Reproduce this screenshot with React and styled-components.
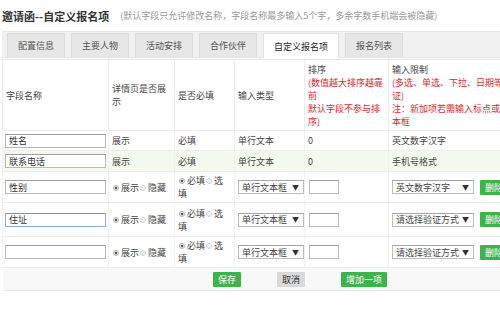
import React from "react"
import styled, { createGlobalStyle } from "styled-components"

const GlobalStyle = createGlobalStyle`
  html, body {
    margin: 0;
    padding: 0;
    background: #fff;
    overflow: hidden;
  }
  body {
    font-family: "Noto Sans CJK SC", "Noto Sans", "Liberation Sans", sans-serif;
    font-size: 9px;
    color: #333;
  }
`

const Page = styled.div`
  width: 500px;
  overflow: hidden;
  padding-left: 2px;
  box-sizing: border-box;
`

const TitleBar = styled.div`
  height: 31px;
  display: flex;
  align-items: center;
  gap: 11px;
`

const Title = styled.h1`
  margin: 0;
  font-size: 11px;
  font-weight: bold;
  color: #333;
`

const Hint = styled.span`
  font-size: 9px;
  color: #999;
  white-space: nowrap;
`

const TabBar = styled.div`
  display: flex;
  align-items: flex-end;
  gap: 6px;
  height: 27px;
  width: 600px;
  padding-left: 5px;
  background: #f1f1f1;
  border-top: 1px solid #e6e6e6;
  border-bottom: 1px solid #e2e2e2;
  box-sizing: border-box;
`

const Tab = styled.div`
  height: 23px;
  padding: 0 10px;
  min-width: 36px;
  display: flex;
  align-items: center;
  justify-content: center;
  white-space: nowrap;
  color: ${(p) => (p.$active ? "#222" : "#555")};
  background: ${(p) => (p.$active ? "#fff" : "#e7e7e7")};
  border: 1px solid ${(p) => (p.$active ? "#e2e2e2" : "#dcdcdc")};
  border-bottom: none;
  margin-bottom: ${(p) => (p.$active ? "-1px" : "0")};
  height: ${(p) => (p.$active ? "24px" : "23px")};
`

const Table = styled.table`
  margin-top: 1px;
  width: 596px;
  border-collapse: collapse;
  table-layout: fixed;
  line-height: 13px;
`

const Th = styled.th`
  font-weight: normal;
  text-align: left;
  vertical-align: middle;
  padding: 1px 3px;
  height: 68px;
  border: 1px solid #ececec;
  border-top-color: #e4e4e4;
  color: #444;
  white-space: nowrap;
`

const Red = styled.span`
  color: #e3262a;
`

const Row = styled.tr`
  background: ${(p) => (p.$tint ? "#f3f9ee" : "#fff")};
  height: ${(p) => p.$h}px;
`

const Td = styled.td`
  padding: 0 3px;
  vertical-align: middle;
  border-bottom: 1px solid #ececec;
  border-left: 1px solid #f1f1f1;
  border-right: 1px solid #f1f1f1;
  color: #444;
  white-space: nowrap;
`

const NameInput = styled.input`
  box-sizing: border-box;
  width: 101px;
  height: 14px;
  margin: 0 0 0 -1px;
  padding: 0 3px;
  font: inherit;
  font-size: 9px;
  color: #333;
  background: #fff;
  border: 1px solid ${(p) => (p.$focus ? "#8fb3dd" : "#b9b9b9")};
  border-top-color: ${(p) => (p.$focus ? "#6b98cf" : "#9d9d9d")};
  outline: none;
`

const SortInput = styled.input`
  box-sizing: border-box;
  width: 30px;
  height: 14px;
  margin: 0 0 0 1px;
  padding: 0 2px;
  font: inherit;
  background: #fff;
  border: 1px solid #bdbdbd;
  border-top-color: #a2a2a2;
  outline: none;
`

const Choices = styled.div`
  display: block;
  white-space: nowrap;
`

const Dot = styled.span`
  display: inline-block;
  box-sizing: border-box;
  width: 6px;
  height: 6px;
  border-radius: 50%;
  margin: 0 2px 0 1px;
  vertical-align: 0;
  border: 1px solid ${(p) => (p.$on ? "#b5b5b5" : "#c9d3dc")};
  background: ${(p) =>
    p.$on ? "radial-gradient(circle, #555 0 1.3px, #e4e4e4 1.6px)" : "#f2f4f6"};
`

const SelectBox = styled.div`
  box-sizing: border-box;
  display: inline-flex;
  align-items: center;
  justify-content: space-between;
  width: ${(p) => p.$w}px;
  height: 14px;
  padding: 0 4px 0 3px;
  background: #fff;
  border: 1px solid #bdbdbd;
  border-top-color: #a5a5a5;
  color: #444;
  vertical-align: middle;
`

const Arrow = styled.span`
  font-size: 7px;
  color: #333;
`

const LimitCell = styled.div`
  display: flex;
  align-items: center;
  gap: 6px;
`

const Button = styled.button`
  height: 15px;
  padding: 0 5px;
  border: none;
  border-radius: 1px;
  font: inherit;
  font-size: 9px;
  line-height: 15px;
  color: ${(p) => (p.$gray ? "#333" : "#fff")};
  background: ${(p) => (p.$gray ? "#d9d9d9" : "#3db44a")};
  cursor: pointer;
`

const FootCell = styled.td`
  height: 22px;
  background: #f8f8f8;
  border-bottom: 1px solid #e6e6e6;
  padding: 0;
`

const FootBar = styled.div`
  display: flex;
  justify-content: center;
  align-items: center;
  gap: 36px;
`

const tabs = ["配置信息", "主要人物", "活动安排", "合作伙伴", "自定义报名项", "报名列表"]

const Radios = ({ a, b, wrap }) => (
  <Choices>
    <Dot $on />
    {a}
    <Dot />
    {wrap ? (
      <>
        {b[0]}
        <br />
        {b[1]}
      </>
    ) : (
      b
    )}
  </Choices>
)

const fixedRows = [
  { name: "姓名", limit: "英文数字汉字" },
  { name: "联系电话", limit: "手机号格式", tint: true },
]

const editRows = [
  { name: "性别", limit: "英文数字汉字", h: 31 },
  { name: "住址", limit: "请选择验证方式", h: 34, focus: true },
  { name: "", limit: "请选择验证方式", h: 31 },
]

export default function App() {
  return (
    <Page>
      <GlobalStyle />
      <TitleBar>
        <Title>邀请函--自定义报名项</Title>
        <Hint>(默认字段只允许修改名称，字段名称最多输入5个字，多余字数手机端会被隐藏)</Hint>
      </TitleBar>
      <TabBar>
        {tabs.map((t) => (
          <Tab key={t} $active={t === "自定义报名项"}>
            {t}
          </Tab>
        ))}
      </TabBar>
      <Table>
        <colgroup>
          <col style={{ width: 106 }} />
          <col style={{ width: 66 }} />
          <col style={{ width: 60 }} />
          <col style={{ width: 70 }} />
          <col style={{ width: 84 }} />
          <col />
        </colgroup>
        <thead>
          <tr>
            <Th>字段名称</Th>
            <Th>
              详情页是否展
              <br />示
            </Th>
            <Th>是否必填</Th>
            <Th>输入类型</Th>
            <Th>
              排序
              <br />
              <Red>
                (数值越大排序越靠
                <br />前<br />
                默认字段不参与排
                <br />序)
              </Red>
            </Th>
            <Th>
              输入限制
              <br />
              <Red>
                (多选、单选、下拉、日期等无需验
                <br />证)
                <br />
                注：新加项若需输入标点或符号请选单行文
                <br />
                本框
              </Red>
            </Th>
          </tr>
        </thead>
        <tbody>
          {fixedRows.map((r) => (
            <Row key={r.name} $tint={r.tint} $h={r.tint ? 21 : 20}>
              <Td>
                <NameInput defaultValue={r.name} />
              </Td>
              <Td>展示</Td>
              <Td>必填</Td>
              <Td>单行文本</Td>
              <Td>0</Td>
              <Td>{r.limit}</Td>
            </Row>
          ))}
          {editRows.map((r, i) => (
            <Row key={i} $h={r.h}>
              <Td>
                <NameInput defaultValue={r.name} $focus={r.focus} />
              </Td>
              <Td>
                <Radios a="展示" b="隐藏" />
              </Td>
              <Td>
                <Radios a="必填" b={["选", "填"]} wrap />
              </Td>
              <Td>
                <SelectBox $w={66}>
                  单行文本框
                  <Arrow>▼</Arrow>
                </SelectBox>
              </Td>
              <Td>
                <SortInput />
              </Td>
              <Td>
                <LimitCell>
                  <SelectBox $w={82}>
                    {r.limit}
                    <Arrow>▼</Arrow>
                  </SelectBox>
                  <Button>删除</Button>
                </LimitCell>
              </Td>
            </Row>
          ))}
          <tr>
            <FootCell colSpan={6}>
              <FootBar>
                <Button>保存</Button>
                <Button $gray>取消</Button>
                <Button>增加一项</Button>
              </FootBar>
            </FootCell>
          </tr>
        </tbody>
      </Table>
    </Page>
  )
}
